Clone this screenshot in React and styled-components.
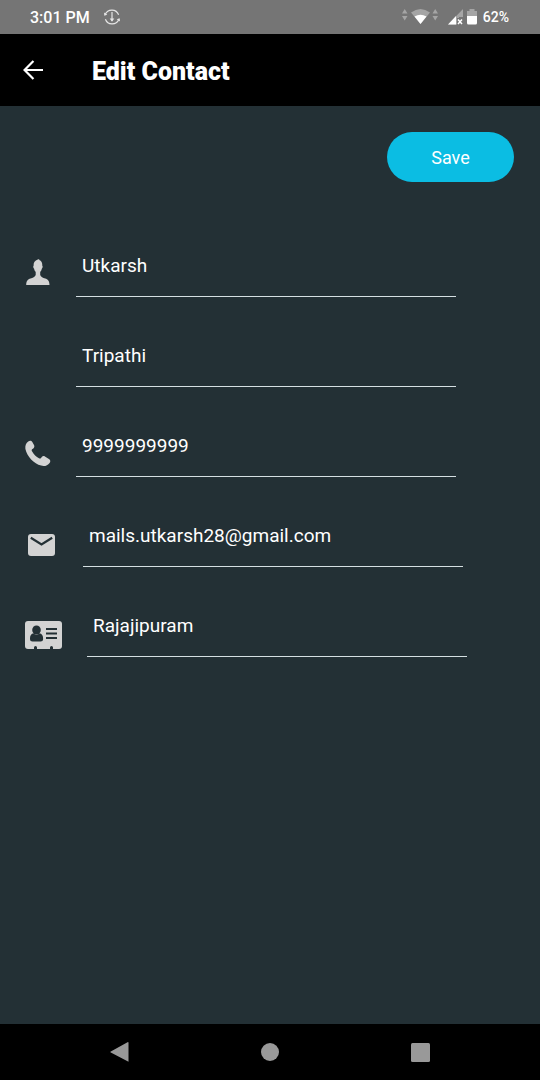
import React from "react";
import styled, { createGlobalStyle } from "styled-components";

const GlobalStyle = createGlobalStyle`
  * { box-sizing: border-box; }
  body { margin: 0; background: #233035; }
  body, input, button { font-family: Roboto, "Liberation Sans", sans-serif; }
`;

const Screen = styled.div`
  display: flex;
  flex-direction: column;
  min-height: 100vh;
  background: #233035;
  color: #fff;
`;

const StatusBar = styled.div`
  display: flex;
  align-items: center;
  justify-content: space-between;
  height: 34px;
  padding: 0 31px 0 30px;
  background: #757575;
`;

const StatusGroup = styled.div`
  display: flex;
  align-items: center;
  gap: ${(p) => p.$gap}px;
`;

const Clock = styled.time`
  padding-top: 2px;
  font-size: 16px;
  font-weight: 500;
  line-height: 20px;
`;

const Battery = styled.span`
  font-size: 14px;
  font-weight: 500;
  line-height: 20px;
`;

const Glyph = styled.svg`
  display: block;
  flex: none;
`;

const AppBar = styled.header`
  display: flex;
  align-items: center;
  gap: 41px;
  height: 72px;
  padding: 0 15px;
  background: #000;
`;

const BarButton = styled.button`
  display: grid;
  place-items: center;
  width: 36px;
  height: 36px;
  padding: 0;
  border: 0;
  background: none;
  color: inherit;
`;

const Title = styled.h1`
  margin: 0;
  padding-top: 4px;
  font-size: 25px;
  font-weight: 900;
  line-height: 32px;
`;

const Form = styled.form`
  flex: 1;
  display: flex;
  flex-direction: column;
  padding-top: 26px;
`;

const SaveButton = styled.button`
  align-self: flex-end;
  width: 127px;
  height: 50px;
  margin: 0 26px 25px 0;
  padding: 0;
  border: 0;
  border-radius: 25px;
  background: #0bbde3;
  color: #fff;
  font-size: 18px;
`;

const Row = styled.div`
  display: flex;
  align-items: flex-end;
  height: 90px;
  padding-left: 25px;
`;

const IconLabel = styled.label`
  flex: none;
  width: ${(p) => p.$width}px;
  padding: 0 0 8px ${(p) => p.$inset || 0}px;
  color: #d3d3d3;
`;

const Field = styled.input`
  width: calc(100% - 135px);
  height: 64px;
  padding: 2px 6px 0;
  border: 0;
  border-bottom: 1px solid #d5dfe2;
  border-radius: 0;
  outline: 0;
  background: transparent;
  color: #fff;
  font-size: 19px;
`;

const NavBar = styled.nav`
  display: flex;
  align-items: center;
  justify-content: center;
  gap: 114px;
  height: 56px;
  background: #000;
  color: #999;
`;

const PersonIcon = () => (
  <Glyph width="25" height="30" viewBox="0 0 25 30" fill="currentColor">
    <path d="M12.800 .6C14 0 14.600.2 14.300 1c2 .8 3.200 2.800 3 5.800.7.400.3 2.400-.5 3-.3 1.500-.9 2.500-1.600 3.200v3.100c.7 1.900 2.700 2.700 5 3.500 2.600.9 4.200 2.300 4.300 6.400H1.200c.1-4.100 1.700-5.500 4.300-6.400 2.300-.8 4.500-1.600 5.200-3.500V13c-.7-.7-1.300-1.700-1.600-3.200-.8-.6-1.200-2.600-.5-3-.2-3 1.300-5.400 4.200-6.200z" />
  </Glyph>
);

const PhoneIcon = () => (
  <Glyph width="26" height="29" viewBox="0 0 26 29" fill="currentColor">
    <path d="M3.200 1.500C4.900.3 6.500.7 7.300 2l1.700 3.100c.7 1.200.4 2.600-.7 3.400l-1.200.8c-.6.500-.5 1.200-.1 2 1.800 3.200 4.200 5.500 7 7 .8.400 1.500.3 2-.3l.8-1c.8-1 2-1.200 3.100-.5l4 2.400c1.600 1 1.800 2.500.7 4-1.900 2.500-5.100 3.800-8.500 2.700C8.900 23.700 2 16.500.4 9 .1 6 .7 3.300 3.200 1.500z" />
  </Glyph>
);

const MailIcon = () => (
  <Glyph width="27" height="26" viewBox="0 0 27 26">
    <rect y="1" width="27" height="22" rx="3" fill="currentColor" />
    <path d="M2.800 4.800l10.700 6.700 10.700-6.700" fill="none" stroke="#233035" strokeWidth="2.200" />
  </Glyph>
);

const CardIcon = () => (
  <Glyph width="37" height="28" viewBox="0 0 37 28">
    <rect width="37" height="28" rx="3" fill="currentColor" />
    <g fill="#233035">
      <ellipse cx="11.500" cy="9" rx="4.300" ry="4.500" />
      <path d="M8.200 12.300c1.900 1.800 4.700 1.800 6.600 0 2.300.4 3.400 2.700 3.300 5.700 0 1.700-1 2.500-2.500 2.500H7.500C6 20.500 5 19.700 5 18c-.1-3 1-5.300 3.200-5.700z" />
      <path d="M21 7h11v2H21zM21 11.500h11v2H21zM21 16h11v2H21zM9 28v-1.500a1.500 1.500 0 0 1 3 0V28zM25 28v-1.500a1.500 1.500 0 0 1 3 0V28z" />
    </g>
  </Glyph>
);

const fields = [
  { id: "first", name: "First name", value: "Utkarsh", width: 51, Icon: PersonIcon },
  { id: "last", name: "Last name", value: "Tripathi", width: 51 },
  { id: "phone", name: "Phone", type: "tel", value: "9999999999", width: 51, Icon: PhoneIcon },
  { id: "email", name: "Email", value: "mails.utkarsh28@gmail.com", width: 58, inset: 3, Icon: MailIcon },
  { id: "address", name: "Address", value: "Rajajipuram", width: 62, Icon: CardIcon },
];

export default function App() {
  return (
    <Screen>
      <GlobalStyle />
      <StatusBar>
        <StatusGroup $gap={14}>
          <Clock>3:01 PM</Clock>
          <Glyph width="16" height="16" viewBox="0 0 16 16" fill="none" stroke="#e6e6e6">
            <path d="M1.200 5.500a7.200 7.200 0 0 1 13.400.3M14.800 10.500a7.200 7.200 0 0 1-13.400-.3M8 3v9" strokeWidth="1.200" />
            <path d="M0 3.500l.3 3.200 3-1zM16 12.500l-.3-3.200-3 1zM5.700 9.500h4.600L8 12.700z" fill="#e6e6e6" stroke="none" />
          </Glyph>
        </StatusGroup>
        <StatusGroup $gap={6}>
          <Glyph width="75" height="18" viewBox="0 0 75 18">
            <path d="M0 5.500L2.700 1l2.800 4.500zM0 8h5.500L2.700 12.500zM30.500 5.500L33.200 1 36 5.500zM30.500 8H36l-2.800 4.500z" fill="#a5a5a5" />
            <path d="M9 4.500Q18.500-2.500 28 4.500L18.500 16z" fill="#a5a5a5" />
            <path d="M12.500 8.500q6-3.500 12 0L18.500 16z" fill="#fff" />
            <path d="M46 16.500L61 1v8h-4v7.500z" fill="#a5a5a5" />
            <path d="M46 16.500L54 8v8.500z" fill="#fff" />
            <path d="M55 10h6v7h-6z" fill="#757575" />
            <path d="M56 11.500l4 4.500M60 11.500L56 16" stroke="#fff" strokeWidth="1.500" />
            <path d="M65 3h2.500V1h5v2H75v6H65z" fill="#a5a5a5" />
            <path d="M65 8h10v7q0 1.500-1.500 1.500h-7Q65 16.500 65 15z" fill="#fff" />
          </Glyph>
          <Battery>62%</Battery>
        </StatusGroup>
      </StatusBar>
      <AppBar>
        <BarButton type="button" aria-label="Back">
          <Glyph width="20" height="20" viewBox="0 0 22 22" fill="none" stroke="currentColor" strokeWidth="2.400">
            <path d="M22 11H2.500M11.500 1L1.700 11l9.800 10" />
          </Glyph>
        </BarButton>
        <Title>Edit Contact</Title>
      </AppBar>
      <Form>
        <SaveButton type="button">Save</SaveButton>
        {fields.map(({ id, name, type = "text", value, width, inset, Icon }) => (
          <Row key={id}>
            <IconLabel htmlFor={id} aria-label={name} $width={width} $inset={inset}>
              {Icon && <Icon />}
            </IconLabel>
            <Field id={id} type={type} defaultValue={value} aria-label={name} />
          </Row>
        ))}
      </Form>
      <NavBar>
        <BarButton type="button" aria-label="Back">
          <Glyph width="20" height="20" viewBox="0 0 20 20" fill="currentColor">
            <path d="M18.500.2v19.600L.8 10.600q-1-.6 0-1.200L17.500.2q1-.5 1 .6z" />
          </Glyph>
        </BarButton>
        <BarButton type="button" aria-label="Home">
          <Glyph width="18" height="18" viewBox="0 0 18 18" fill="currentColor">
            <circle cx="9" cy="9" r="9" />
          </Glyph>
        </BarButton>
        <BarButton type="button" aria-label="Recent apps">
          <Glyph width="19" height="19" viewBox="0 0 19 19" fill="currentColor">
            <rect width="19" height="19" rx="1.500" />
          </Glyph>
        </BarButton>
      </NavBar>
    </Screen>
  );
}
